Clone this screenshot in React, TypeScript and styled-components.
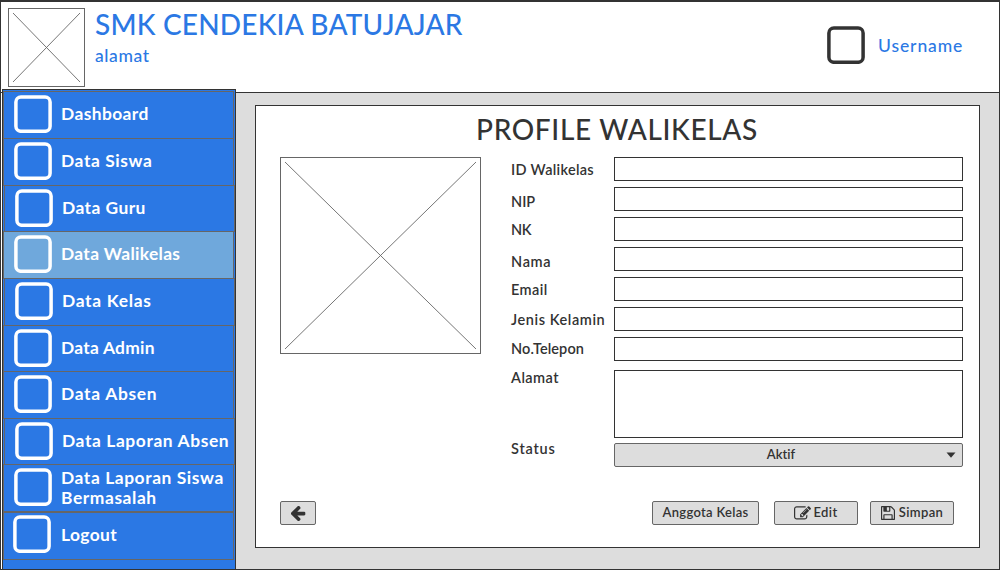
import React from "react";
import styled, { createGlobalStyle } from "styled-components";

const ink = "#333333";
const blue = "#2b78e4";
const line = "#666666";
const grey = "#dddddd";

const GlobalStyle = createGlobalStyle`
  *, *::before, *::after { box-sizing: border-box; }
  body { margin: 0; background: #fff; }
  body, button { font-family: Lato, "Open Sans", sans-serif; font-weight: 500; color: ${ink}; }
`;

const Page = styled.div`
  width: 1000px;
  height: 570px;
  display: flex;
  flex-direction: column;
  overflow: hidden;
  background: #fff;
  border: 1px solid ${ink};
  border-top-width: 2px;
`;

const Header = styled.header`
  flex: none;
  height: 91px;
  display: flex;
  padding: 6px 35px 0 7px;
  border-bottom: 1px solid ${ink};
`;

const Brand = styled.div`
  flex: 1;
  margin-left: 10px;
  color: ${blue};
`;

const SchoolName = styled.h1`
  margin: 0;
  font-size: 28px;
  line-height: 32px;
  font-weight: 500;
  white-space: nowrap;
`;

const Address = styled.p`
  margin: 6px 0 0;
  font-size: 17.5px;
  line-height: 20px;
`;

const User = styled.div`
  display: flex;
  align-items: flex-start;
  gap: 13px;
  padding-top: 18px;
  color: ${blue};
`;

const UserName = styled.span`
  width: 86px;
  padding-top: 10px;
  font-size: 17.5px;
  line-height: 20px;
  white-space: nowrap;
`;

const Tracked = styled.span<{ $ls?: number }>`
  letter-spacing: ${(p) => p.$ls ?? 0}px;
`;

const Body = styled.div`
  flex: 1;
  min-height: 0;
  display: flex;
`;

const Sidebar = styled.nav`
  position: relative;
  flex: none;
  width: 234px;
  margin: -4px 0 0 1px;
  padding-top: 1px;
  background: ${blue};
  border: 1px solid ${ink};
  border-bottom: 0;
`;

const MenuItem = styled.a<{ $h: number; $shift?: boolean; $active?: boolean; $last?: boolean }>`
  display: flex;
  align-items: flex-start;
  gap: ${(p) => (p.$last ? 10 : 9)}px;
  width: 231px;
  height: ${(p) => p.$h + 1}px;
  margin: ${(p) => (p.$last ? 1 : 0)}px 0 -1px ${(p) => (p.$shift ? 1 : 0)}px;
  padding: ${(p) => (p.$last ? "2px 0 0 9px" : "3px 0 0 10px")};
  border: 1px solid ${line};
  background: ${(p) => (p.$active ? "#6fa8dc" : blue)};
  color: #fff;
`;

const MenuLabel = styled.span<{ $top: number }>`
  padding-top: ${(p) => p.$top}px;
  font-size: 17.4px;
  line-height: 20px;
  font-weight: 700;
  white-space: pre;
`;

const Main = styled.main`
  flex: 1;
  padding: 12px 19px 21px;
  background: ${grey};
`;

const Card = styled.section`
  height: 443px;
  padding: 0 16px 0 24px;
  background: #fff;
  border: 1px solid ${ink};
`;

const Title = styled.h2`
  margin: 0;
  height: 51px;
  padding: 7px 9px 0 0;
  font-size: 28px;
  line-height: 32px;
  font-weight: 500;
  text-align: center;
`;

const Content = styled.div`
  display: flex;
  height: 344px;
`;

const Form = styled.div`
  margin-left: 30px;
  display: flex;
  flex-direction: column;
`;

const Row = styled.div<{ $gap: number }>`
  display: flex;
  align-items: flex-start;
  margin-bottom: ${(p) => p.$gap}px;
`;

const Label = styled.label<{ $top: number; $left?: number }>`
  width: 103px;
  height: 18px;
  margin-top: ${(p) => p.$top}px;
  padding-left: ${(p) => p.$left ?? 0}px;
  font-size: 14.5px;
  line-height: 20px;
  font-weight: 600;
  white-space: nowrap;
`;

const Field = styled.div<{ $h?: number }>`
  width: 349px;
  height: ${(p) => p.$h ?? 24}px;
  background: #fff;
  border: 1px solid ${ink};
`;

const Select = styled.div`
  display: flex;
  align-items: center;
  width: 349px;
  height: 24px;
  padding-right: 6px;
  background: ${grey};
  border: 1px solid ${line};
  border-radius: 2px;
  font-size: 13px;
  line-height: 20px;
  font-weight: 600;
`;

const SelectValue = styled.span`
  flex: 1;
  padding: 0 0 2px 1px;
  letter-spacing: 0.05px;
  text-align: center;
`;

const Actions = styled.div`
  display: flex;
  padding-right: 9px;
`;

const Button = styled.button<{ $w: number; $ml?: string; $gap?: number }>`
  display: flex;
  align-items: center;
  justify-content: center;
  gap: ${(p) => p.$gap ?? 0}px;
  width: ${(p) => p.$w}px;
  height: 24px;
  margin: 0 0 0 ${(p) => p.$ml ?? "0"};
  padding: 0;
  background: ${grey};
  border: 1px solid ${line};
  border-radius: 2px;
  font-size: 13px;
  line-height: 20px;
  font-weight: 600;
  white-space: nowrap;
`;

const ButtonText = styled(Tracked)`
  padding-bottom: 2px;
`;

const Drawing = styled.svg`
  display: block;
  flex: none;
`;

function Placeholder({ w, h }: { w: number; h: number }) {
  return (
    <Drawing width={w} height={h} fill="none" stroke={line}>
      <rect x=".5" y=".5" width={w - 1} height={h - 1} />
      <path d={`M5 5L${w - 5} ${h - 5}M${w - 5} 5L5 ${h - 5}`} strokeWidth=".9" />
    </Drawing>
  );
}

function SquareIcon({ color }: { color: string }) {
  return (
    <Drawing width="38" height="38" fill="none" stroke={color} strokeWidth="3.5">
      <rect x="1.9" y="2.1" width="34.2" height="34.2" rx="5" />
    </Drawing>
  );
}

const ArrowLeft = () => (
  <Drawing width="15" height="15" viewBox="70 192 1536 1536" fill={ink}>
    <path d="M1536 896v128q0 53-32.5 90.5t-84.5 37.5h-704l293 294q38 36 38 90t-38 90l-75 76q-37 37-90 37-52 0-91-37l-651-652q-37-37-37-90 0-52 37-91l651-650q38-38 91-38 52 0 90 38l75 74q38 38 38 91t-38 91l-293 293h704q52 0 84.5 37.5t32.5 90.5z" />
  </Drawing>
);

const PencilSquare = () => (
  <Drawing width="17" height="17" viewBox="0 0 1792 1792" fill={ink}>
    <path d="M888 1184l116-116-152-152-116 116v56h96v96h56zm440-720q-16-16-33 1l-350 350q-17 17-1 33t33-1l350-350q17-17 1-33zm80 594v190q0 119-84.5 203.5t-203.5 84.5h-832q-119 0-203.5-84.5t-84.5-203.5v-832q0-119 84.5-203.5t203.5-84.5h832q63 0 117 25 15 7 18 23 3 17-9 29l-49 49q-14 14-32 8-23-6-45-6h-832q-66 0-113 47t-47 113v832q0 66 47 113t113 47h832q66 0 113-47t47-113v-126q0-13 9-22l64-64q15-15 35-7t20 29zm-96-738l288 288-672 672h-288v-288zm444 132l-92 92-288-288 92-92q28-28 68-28t68 28l152 152q28 28 28 68t-28 68z" />
  </Drawing>
);

const Floppy = () => (
  <Drawing width="14" height="14" viewBox="0 128 1536 1536" fill={ink}>
    <path d="M384 1536h768v-384h-768v384zM1280 1536h128v-896q0-14-10-38.5t-20-34.5l-281-281q-10-10-34-20t-39-10v416q0 40-28 68t-68 28h-576q-40 0-68-28t-28-68v-416h-128v1280h128v-416q0-40 28-68t68-28h832q40 0 68 28t28 68v416zM896 608v-320q0-13-9.5-22.5t-22.5-9.5h-192q-13 0-22.5 9.5t-9.5 22.5v320q0 13 9.5 22.5t22.5 9.5h192q13 0 22.5-9.5t9.5-22.5zM1536 640v928q0 40-28 68t-68 28h-1344q-40 0-68-28t-28-68v-1344q0-40 28-68t68-28h928q40 0 88 20t76 48l280 280q28 28 48 76t20 88z" />
  </Drawing>
);

const menu = [
  { text: "Dashboard", h: 47, ls: 0.4 },
  { text: "Data Siswa", h: 47, ls: 0.6 },
  { text: "Data Guru", h: 46, ls: 0.45, shift: true },
  { text: "Data Walikelas", h: 47, ls: 0.32, active: true },
  { text: "Data Kelas", h: 47, ls: 0.7, shift: true },
  { text: "Data Admin", h: 46, ls: 0.25 },
  { text: "Data Absen", h: 47, ls: 0.7 },
  { text: "Data Laporan Absen", h: 46, ls: 0.61, shift: true },
  { text: "Data Laporan Siswa\nBermasalah", h: 47, ls: 0.58, top: 0 },
  { text: "Logout", h: 47, ls: 0.4, top: 10, last: true },
];

const fields = [
  { text: "ID Walikelas", top: 3, ls: 0.3 },
  { text: "NIP", top: 5, ls: 0 },
  { text: "NK", top: 3, ls: -0.3 },
  { text: "Nama", top: 5, ls: 0.7 },
  { text: "Email", top: 3, ls: 0.4 },
  { text: "Jenis Kelamin", top: 3, ls: 0.58 },
  { text: "No.Telepon", top: 2, ls: 0.1, gap: 9 },
  { text: "Alamat", top: -2, ls: 0.45, h: 68, gap: 5 },
];

export default function App() {
  return (
    <>
      <GlobalStyle />
      <Page>
        <Header>
          <Placeholder w={77} h={79} />
          <Brand>
            <SchoolName>
              <Tracked $ls={0.2}>SMK CENDEKIA BATUJAJAR</Tracked>
            </SchoolName>
            <Address>
              <Tracked $ls={0.6}>alamat</Tracked>
            </Address>
          </Brand>
          <User>
            <SquareIcon color={ink} />
            <UserName>
              <Tracked $ls={0.9}>Username</Tracked>
            </UserName>
          </User>
        </Header>
        <Body>
          <Sidebar>
            {menu.map((m) => (
              <MenuItem key={m.text} $h={m.h} $shift={m.shift} $active={m.active} $last={m.last}>
                <SquareIcon color="#fff" />
                <MenuLabel $top={m.top ?? 9}>
                  <Tracked $ls={m.ls}>{m.text}</Tracked>
                </MenuLabel>
              </MenuItem>
            ))}
          </Sidebar>
          <Main>
            <Card>
              <Title>
                <Tracked $ls={0.64}>PROFILE WALIKELAS</Tracked>
              </Title>
              <Content>
                <Placeholder w={201} h={197} />
                <Form>
                  {fields.map((f) => (
                    <Row key={f.text} $gap={f.gap ?? 6}>
                      <Label $top={f.top}>
                        <Tracked $ls={f.ls}>{f.text}</Tracked>
                      </Label>
                      <Field $h={f.h} />
                    </Row>
                  ))}
                  <Row $gap={0}>
                    <Label $top={-4}>
                      <Tracked $ls={0.8}>Status</Tracked>
                    </Label>
                    <Select>
                      <SelectValue>Aktif</SelectValue>
                      <Drawing width="10" height="6" fill={ink}>
                        <path d="M.5 .5h9L5 5.8z" />
                      </Drawing>
                    </Select>
                  </Row>
                </Form>
              </Content>
              <Actions>
                <Button $w={36} aria-label="Kembali">
                  <ArrowLeft />
                </Button>
                <Button $w={107} $ml="auto">
                  <ButtonText $ls={0.3}>Anggota Kelas</ButtonText>
                </Button>
                <Button $w={84} $ml="15px" $gap={2}>
                  <PencilSquare />
                  <ButtonText $ls={0.4}>Edit</ButtonText>
                </Button>
                <Button $w={84} $ml="12px" $gap={4}>
                  <Floppy />
                  <ButtonText $ls={0.35}>Simpan</ButtonText>
                </Button>
              </Actions>
            </Card>
          </Main>
        </Body>
      </Page>
    </>
  );
}
